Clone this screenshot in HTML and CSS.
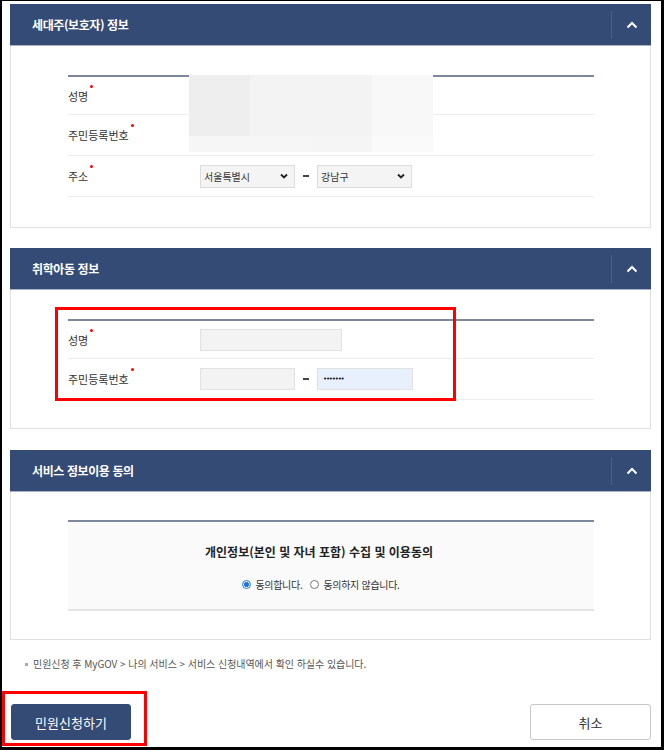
FILE: index.html
```html
<!DOCTYPE html>
<html lang="ko">
<head>
<meta charset="utf-8">
<title>민원신청</title>
<link rel="stylesheet" href="styles.css">
</head>
<body>
<div class="frame">
  <section class="panel panel-owner">
    <div class="panel-head">
      <h2>세대주(보호자) 정보</h2>
      <span class="toggle"><svg width="12" height="8" viewBox="0 0 12 8"><path d="M1.5 6.5 L6 2 L10.5 6.5" fill="none" stroke="#fff" stroke-width="2"/></svg></span>
    </div>
    <div class="panel-body">
      <div class="form-table">
        <div class="row"><div class="label">성명<i class="req"></i></div><div class="value"></div></div>
        <div class="row"><div class="label">주민등록번호<i class="req"></i></div><div class="value"></div></div>
        <div class="row">
          <div class="label">주소<i class="req"></i></div>
          <div class="value">
            <div class="select"><span>서울특별시</span><svg width="8" height="6" viewBox="0 0 8 6"><path d="M1 1.5 L4 4.5 L7 1.5" fill="none" stroke="#222" stroke-width="1.8"/></svg></div>
            <span class="dash"><i></i></span>
            <div class="select"><span>강남구</span><svg width="8" height="6" viewBox="0 0 8 6"><path d="M1 1.5 L4 4.5 L7 1.5" fill="none" stroke="#222" stroke-width="1.8"/></svg></div>
          </div>
        </div>
        <div class="redact">
          <span class="r1"></span><span class="r2"></span><span class="r3"></span>
          <span class="r4"></span><span class="r5"></span><span class="r6"></span><span class="r7"></span>
        </div>
      </div>
    </div>
  </section>

  <section class="panel panel-child">
    <div class="panel-head">
      <h2>취학아동 정보</h2>
      <span class="toggle"><svg width="12" height="8" viewBox="0 0 12 8"><path d="M1.5 6.5 L6 2 L10.5 6.5" fill="none" stroke="#fff" stroke-width="2"/></svg></span>
    </div>
    <div class="panel-body">
      <div class="form-table">
        <div class="row"><div class="label">성명<i class="req"></i></div><div class="value"><span class="input wide"></span></div></div>
        <div class="row">
          <div class="label">주민등록번호<i class="req"></i></div>
          <div class="value">
            <span class="input"></span>
            <span class="dash"><i></i></span>
            <span class="input filled">•••••••</span>
          </div>
        </div>
      </div>
    </div>
  </section>

  <section class="panel panel-consent">
    <div class="panel-head">
      <h2>서비스 정보이용 동의</h2>
      <span class="toggle"><svg width="12" height="8" viewBox="0 0 12 8"><path d="M1.5 6.5 L6 2 L10.5 6.5" fill="none" stroke="#fff" stroke-width="2"/></svg></span>
    </div>
    <div class="panel-body">
      <div class="consent">
        <h3>개인정보(본인 및 자녀 포함) 수집 및 이용동의</h3>
        <div class="radios">
          <span class="radio checked"></span><span class="radio-label">동의합니다.</span>
          <span class="radio"></span><span class="radio-label">동의하지 않습니다.</span>
        </div>
      </div>
    </div>
  </section>

  <p class="note"><i class="bullet"></i>민원신청 후 MyGOV &gt; 나의 서비스 &gt; 서비스 신청내역에서 확인 하실수 있습니다.</p>

  <div class="actions">
    <button class="btn primary">민원신청하기</button>
    <button class="btn">취소</button>
  </div>

  <div class="mark mark-child"></div>
  <div class="mark mark-submit"></div>
</div>
</body>
</html>
```

FILE: styles.css
```css
html, body {
  margin: 0;
  padding: 0;
  background: #fff;
}

.frame {
  position: relative;
  width: 664px;
  height: 750px;
  box-sizing: border-box;
  border-style: solid;
  border-color: #000;
  border-width: 1px 3px 3px 2px;
  padding: 3px 10px 0 8px;
  font-family: "Noto Sans CJK KR", "Noto Sans", sans-serif;
  color: #333;
  background: #fff;
}

.panel + .panel {
  margin-top: 20px;
}

.panel-consent {
  margin-top: 21px !important;
}

.panel-head {
  height: 42px;
  box-sizing: border-box;
  background: #344b76;
  border-bottom: 1px solid #a9b3c6;
  display: flex;
  align-items: center;
  justify-content: space-between;
}

.panel-head h2 {
  margin: 0;
  padding-left: 22px;
  font-size: 12px;
  font-weight: 700;
  color: #fff;
  letter-spacing: -0.4px;
}

.toggle {
  width: 40px;
  height: 28px;
  box-sizing: border-box;
  border-left: 1px solid #4a5f88;
  display: flex;
  align-items: center;
  justify-content: center;
}

.panel-body {
  border: 1px solid #e0e0e0;
  border-top: 0;
  padding: 29px 56px 28px 57px;
}

.panel-owner .panel-body {
  padding-bottom: 30px;
}

.panel-consent .panel-body {
  padding-top: 28px;
}

.form-table {
  position: relative;
  border-top: 2px solid #7e889c;
}

.row {
  height: 41px;
  box-sizing: border-box;
  border-bottom: 1px solid #ececec;
  display: flex;
  align-items: center;
}

.row:first-child {
  height: 38px;
}

.label {
  width: 132px;
  font-size: 11px;
  color: #333;
  display: flex;
  align-items: flex-start;
}

.req {
  display: inline-block;
  width: 3px;
  height: 3px;
  border-radius: 50%;
  background: #f00;
  margin-left: 2px;
  margin-top: -3px;
}

.value {
  display: flex;
  align-items: center;
}

.select {
  width: 95px;
  height: 23px;
  box-sizing: border-box;
  background: #f4f4f4;
  border: 1px solid #dcdcdc;
  display: flex;
  align-items: center;
  justify-content: space-between;
  padding: 0 6px 0 3px;
  font-size: 10px;
  color: #333;
}

.dash {
  width: 22px;
  display: flex;
  justify-content: center;
}

.dash i {
  display: block;
  width: 6px;
  height: 2px;
  background: #444;
}

.input {
  width: 95px;
  height: 22px;
  box-sizing: border-box;
  background: #f3f3f3;
  border: 1px solid #e2e2e2;
  display: flex;
  align-items: center;
  padding-left: 5px;
  font-family: "DejaVu Sans", sans-serif;
  font-size: 7px;
  color: #111;
  letter-spacing: -1.2px;
}

.input.wide {
  width: 142px;
}

.input.filled {
  width: 96px;
  background: #e8f0fe;
}

.redact {
  position: absolute;
  left: 121px;
  top: -2px;
  width: 244px;
  height: 77px;
  display: grid;
  grid-template-columns: 61px 61px 61px 61px;
  grid-template-rows: 61px 16px;
}

.redact span { display: block; }
.redact .r1 { background: #eeeeee; }
.redact .r2 { background: #f3f3f3; grid-column: span 2; }
.redact .r3 { background: #f8f8f8; }
.redact .r4 { background: #f6f6f6; }
.redact .r5 { background: #f6f6f6; }
.redact .r6 { background: #f5f5f5; }
.redact .r7 { background: #fafafa; }

.consent {
  border-top: 2px solid #7e889c;
  border-bottom: 2px solid #e4e4e4;
  background: #fafafa;
  padding: 20px 24px 18px 0;
  text-align: center;
}

.consent h3 {
  margin: 0;
  font-size: 12px;
  line-height: 20px;
  font-weight: 700;
  color: #222;
  letter-spacing: 0;
}

.radios {
  margin-top: 15px;
  height: 14px;
  display: flex;
  align-items: center;
  justify-content: center;
  padding-left: 12px;
}

.radio {
  width: 9px;
  height: 9px;
  box-sizing: border-box;
  border-radius: 50%;
  border: 1px solid #767676;
  background: #fff;
  margin-right: 4px;
}

.radio.checked {
  border-color: #1a73e8;
  background: radial-gradient(circle, #1a73e8 0 2.2px, #fff 2.8px);
}

.radio-label {
  font-size: 10px;
  color: #333;
  margin-right: 8px;
  letter-spacing: -0.3px;
}

.note {
  margin: 17px 0 0 15px;
  height: 14px;
  line-height: 14px;
  font-size: 10px;
  color: #555;
  display: flex;
  align-items: center;
  letter-spacing: -0.05px;
}

.bullet {
  display: inline-block;
  width: 3px;
  height: 3px;
  background: #aaa;
  margin-right: 5px;
}

.actions {
  margin-top: 33px;
  display: flex;
  justify-content: space-between;
  padding-left: 1px;
}

.btn {
  height: 36px;
  width: 121px;
  box-sizing: border-box;
  border-radius: 3px;
  border: 1px solid #c8c8c8;
  background: #fff;
  color: #333;
  font-family: "Noto Sans CJK KR", sans-serif;
  font-size: 13px;
  padding: 0;
}

.btn.primary {
  width: 120px;
  background: #344b76;
  border-color: #344b76;
  color: #fff;
}

.mark {
  position: absolute;
  border: 3px solid #f00;
  box-sizing: border-box;
}

.mark-child {
  left: 53px;
  top: 306px;
  width: 401px;
  height: 94px;
}

.mark-submit {
  left: 0;
  top: 690px;
  width: 145px;
  height: 55px;
}
```
